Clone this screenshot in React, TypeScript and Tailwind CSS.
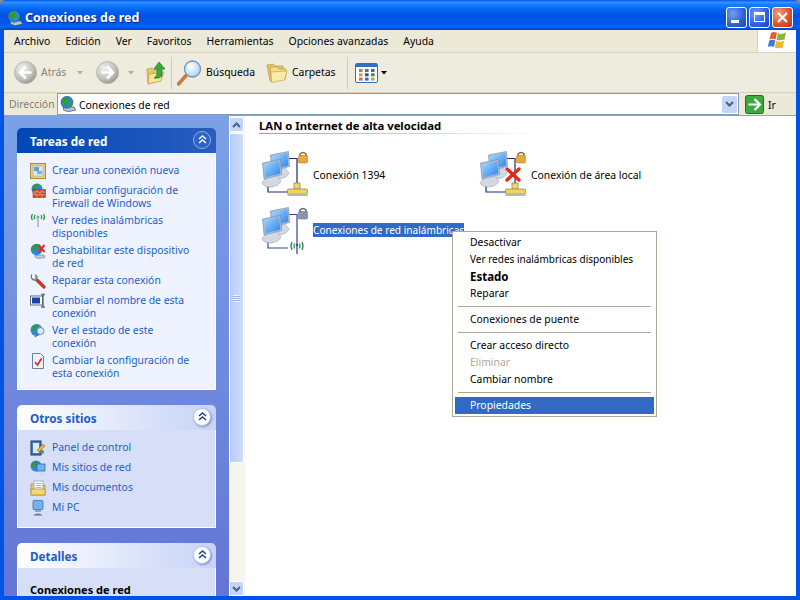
import type { ReactNode } from 'react';

const font = "font-['Noto_Sans','Liberation_Sans',sans-serif]";

function GlobeIcon({ size = 16 }: { size?: number }) {
  return (
    <svg width={size} height={size} viewBox="0 0 16 16" className="shrink-0">
      <path d="M3 10.5 L14 11 L15.8 14 L8 15.8 L3.5 14 Z" fill="#b9c4d2" stroke="#3f4f6b" strokeWidth="0.7" />
      <circle cx="7" cy="6.3" r="6" fill="#2f86e0" stroke="#174a94" strokeWidth="0.6" />
      <path d="M2.4 3.2 Q6 0 9.5 1 L8 4 L9.5 6 L7 8 L5.5 11.5 L3.6 8 L1.4 6 Z" fill="#2f9c3a" />
      <path d="M10 7 L12.8 5.8 L12.2 9.5 L10 10.8 Z" fill="#2f9c3a" />
    </svg>
  );
}

function XpFlag() {
  return (
    <svg width="24" height="22" viewBox="0 0 24 22">
      <path d="M6 3 Q9 1 12 3 L10.5 9.5 Q8 8 4.5 9.5 Z" fill="#ea5a2c" />
      <path d="M13 3 Q16 5 21 2.5 L19.5 9.5 Q15 11 11.6 9.8 Z" fill="#86b83a" />
      <path d="M4.2 10.5 Q8 9 10.3 10.5 L9 17 Q6 15.5 2.8 17 Z" fill="#3d7ed8" />
      <path d="M11.3 11 Q15 12.5 19.2 10.7 L17.8 17.6 Q13 19 9.9 17.6 Z" fill="#f3b82a" />
    </svg>
  );
}

function CaptionButton({ red, children }: { red?: boolean; children: ReactNode }) {
  return (
    <div
      className={`w-[21px] h-[21px] rounded-[3px] border border-white flex items-center justify-center ${
        red
          ? 'bg-[radial-gradient(circle_at_30%_30%,#f0a083,#d9502a_60%,#b8341a)]'
          : 'bg-[radial-gradient(circle_at_30%_30%,#6f9cf5,#2c5fe0_60%,#1a44c0)]'
      }`}
    >
      {children}
    </div>
  );
}

function NavCircle({ dir }: { dir: 'left' | 'right' }) {
  return (
    <svg width="23" height="23" viewBox="0 0 23 23" className="shrink-0">
      <defs>
        <radialGradient id="navGray" cx="35%" cy="30%" r="75%">
          <stop offset="0%" stopColor="#f0f0ee" />
          <stop offset="70%" stopColor="#bdbdb8" />
          <stop offset="100%" stopColor="#97978f" />
        </radialGradient>
      </defs>
      <circle cx="11.5" cy="11.5" r="11" fill="url(#navGray)" stroke="#a4a49d" strokeWidth="0.6" />
      <path
        d={dir === 'left' ? 'M12 5.5 L6 11.5 L12 17.5 M6.5 11.5 H17.5' : 'M11 5.5 L17 11.5 L11 17.5 M16.5 11.5 H5.5'}
        fill="none"
        stroke="#fff"
        strokeWidth="2.6"
      />
    </svg>
  );
}

function SmallArrow({ color = '#b0aea2' }: { color?: string }) {
  return (
    <svg width="6" height="4" viewBox="0 0 6 4" className="shrink-0">
      <path d="M0 0 H6 L3 3.5 Z" fill={color} />
    </svg>
  );
}

function FolderIcon({ w = 22, h = 22 }: { w?: number; h?: number }) {
  return (
    <svg width={w} height={h} viewBox="0 0 22 22" className="shrink-0">
      <path d="M1 3 L7 2 L9 4 L17 4 L18 16 L4 19 Z" fill="#e8c566" stroke="#b89a3e" strokeWidth="0.7" />
      <path d="M4 5 L11 5 L13 7 L20 7 L19.5 17 L5.5 20 Z" fill="#f3dc8c" stroke="#b89a3e" strokeWidth="0.7" />
      <path d="M5 10 L21 9 L18.5 18 L5.5 20.5 Z" fill="#fbeaa8" stroke="#c4a74a" strokeWidth="0.7" />
    </svg>
  );
}

function UpIcon() {
  return (
    <svg width="20" height="24" viewBox="0 0 20 24" className="shrink-0">
      <path d="M1 8 L6 7 L8 9 L15 9 L15 19 L2 23 Z" fill="#e8c566" stroke="#b89a3e" strokeWidth="0.7" />
      <path d="M3 13 L18 11 L15 20 L2 23 Z" fill="#fbe592" stroke="#b89a3e" strokeWidth="0.7" />
      <path d="M13 1 L19 8 L16 8 L16 15 Q13 18 8 17 Q12 15 11 8 L8 8 Z" fill="#3da83d" stroke="#1d7a2a" strokeWidth="0.7" />
    </svg>
  );
}

function SearchIcon() {
  return (
    <svg width="26" height="26" viewBox="0 0 26 26" className="shrink-0">
      <defs>
        <radialGradient id="lens" cx="40%" cy="35%" r="70%">
          <stop offset="0%" stopColor="#ffffff" />
          <stop offset="100%" stopColor="#a9d0ee" />
        </radialGradient>
      </defs>
      <path d="M1.5 24 L10 14.5" stroke="#c97a3a" strokeWidth="3.4" strokeLinecap="round" />
      <circle cx="15.5" cy="9" r="8" fill="url(#lens)" stroke="#6f93b5" strokeWidth="1.3" />
    </svg>
  );
}

function ViewsIcon() {
  const colors = ['#d9703a', '#4a8a3f', '#2f6fc4', '#c9a23a', '#2c4f9e', '#4a8a3f', '#d9703a', '#2f6fc4', '#c9a23a'];
  return (
    <svg width="23" height="20" viewBox="0 0 23 20" className="shrink-0">
      <rect x="0.5" y="0.5" width="22" height="19" rx="1.5" fill="#fff" stroke="#2f6fc4" />
      <rect x="1" y="1" width="21" height="3" fill="#2f6fc4" />
      {colors.map((c, i) => (
        <rect key={i} x={4 + (i % 3) * 6} y={6 + Math.floor(i / 3) * 4.3} width="3.6" height="3" fill={c} />
      ))}
    </svg>
  );
}

function GoIcon() {
  return (
    <svg width="19" height="19" viewBox="0 0 19 19" className="shrink-0">
      <rect x="0.5" y="0.5" width="18" height="18" rx="2" fill="#3da83d" stroke="#1d6d2a" />
      <path d="M9.5 4 L15 9.5 L9.5 15 M14 9.5 H3.5" fill="none" stroke="#fff" strokeWidth="2.2" />
    </svg>
  );
}

function ChevronPair({ dark }: { dark?: boolean }) {
  const stroke = dark ? '#fff' : '#1c3f94';
  return (
    <div
      className={`w-[18px] h-[18px] -mt-[2px] rounded-full flex items-center justify-center ${
        dark ? 'bg-[#2f63c4] border border-[#8fb0e8]' : 'bg-white border border-[#b6c4ea] shadow-[1px_1px_2px_#7f90c8]'
      }`}
    >
      <svg width="9" height="9" viewBox="0 0 9 9">
        <path d="M1 4 L4.5 1 L8 4 M1 8 L4.5 5 L8 8" fill="none" stroke={stroke} strokeWidth="1.5" />
      </svg>
    </div>
  );
}

function TaskIcon({ name }: { name: string }) {
  switch (name) {
    case 'new':
      return (
        <svg width="16" height="16" viewBox="0 0 16 16">
          <rect x="0.5" y="0.5" width="15" height="15" fill="#e5cc8a" stroke="#a98a42" />
          <rect x="3" y="3" width="10" height="10" fill="#dfe6ee" stroke="#8ca0b5" strokeWidth="0.5" />
          <rect x="4" y="4" width="5" height="4" fill="#5ea0e0" />
          <rect x="7" y="8" width="5" height="3" fill="#7fb0d8" />
        </svg>
      );
    case 'firewall':
      return (
        <svg width="16" height="16" viewBox="0 0 16 16">
          <circle cx="7" cy="6" r="5.5" fill="#2f86e0" />
          <path d="M3 2.5 Q6 0 9 1 L8 4 L4 7 L2 5 Z" fill="#2f9c3a" />
          <rect x="3" y="6.5" width="12.5" height="8" fill="#c9472b" stroke="#7f2a14" strokeWidth="0.5" />
          <path d="M3 9 H15.5 M3 11.8 H15.5 M7 6.5 V9 M12 6.5 V9 M5 9 V11.8 M10 9 V11.8 M7 11.8 V14.5 M12 11.8 V14.5" stroke="#f0c090" strokeWidth="0.6" />
        </svg>
      );
    case 'wifi':
      return (
        <svg width="16" height="16" viewBox="0 0 16 16">
          <path d="M2.5 1 Q0.5 4 2.5 7 M5 2 Q3.6 4 5 6 M11 2 Q12.4 4 11 6 M13.5 1 Q15.5 4 13.5 7" fill="none" stroke="#1f9a2a" strokeWidth="1.3" />
          <circle cx="8" cy="4" r="1.4" fill="#8a9ab0" />
          <path d="M8 4 V14" stroke="#8a9ab0" strokeWidth="1.2" />
        </svg>
      );
    case 'disable':
      return (
        <svg width="16" height="16" viewBox="0 0 16 16">
          <path d="M5 12 L14 12 L15 14.5 L8 15.5 L5 14 Z" fill="#c4cdd8" stroke="#5a6b85" strokeWidth="0.5" />
          <circle cx="6.5" cy="6.5" r="5.8" fill="#2f86e0" />
          <path d="M2 4 Q5 0.5 9 1 L8 4 L5 8 L2 7 Z" fill="#2f9c3a" />
          <path d="M8.5 2 L14.5 9 M14.5 2 L8.5 9" stroke="#d9301f" strokeWidth="2" />
        </svg>
      );
    case 'wrench':
      return (
        <svg width="16" height="16" viewBox="0 0 16 16">
          <path d="M1.5 1.5 L1.5 5 L4 6.5 L6 5 L5.5 1.5 Q8 3 7 6 L9 8 L7.5 9.5 L5.5 7.5 Q2 8 1 4.5 Z" fill="#9aa2ac" stroke="#5e6670" strokeWidth="0.7" />
          <path d="M7.5 7.5 L14 14" stroke="#c93a2a" strokeWidth="3.4" strokeLinecap="round" />
        </svg>
      );
    case 'rename':
      return (
        <svg width="16" height="16" viewBox="0 0 16 16">
          <rect x="0.5" y="3" width="12" height="9" fill="#fff" stroke="#5a6b85" />
          <rect x="2" y="4.5" width="8" height="6" fill="#1a3fae" />
          <path d="M11 1.5 H15 M13 1.5 V14 M11 14 H15" stroke="#5a6b85" strokeWidth="1.4" />
        </svg>
      );
    case 'status':
      return (
        <svg width="16" height="16" viewBox="0 0 16 16">
          <circle cx="6.5" cy="7" r="6" fill="#2f86e0" />
          <path d="M1.5 5 Q4 1 9 1.5 L7 5 L3 9 Z" fill="#2f9c3a" />
          <circle cx="10.5" cy="8" r="3.5" fill="#d8ecf8" stroke="#6f93b5" />
          <path d="M5 14 L8 11" stroke="#6b6f7a" strokeWidth="1.6" />
        </svg>
      );
    case 'config':
      return (
        <svg width="16" height="16" viewBox="0 0 16 16">
          <path d="M2.5 0.5 H10.5 L13.5 3.5 V15.5 H2.5 Z" fill="#eef2fa" stroke="#6d7fa5" />
          <path d="M5 9 L7.5 12 L11.5 5.5" fill="none" stroke="#d9301f" strokeWidth="1.7" />
        </svg>
      );
    case 'panel':
      return (
        <svg width="16" height="16" viewBox="0 0 16 16">
          <rect x="1" y="1" width="10" height="14" fill="#4d74c4" stroke="#20356f" />
          <rect x="3" y="3" width="6" height="10" fill="#dfe8f6" />
          <path d="M7 10 L13 4 L15 6 L9 12 Z" fill="#e5b23a" stroke="#7a6220" strokeWidth="0.5" />
          <circle cx="12" cy="12" r="2" fill="#4aa04a" />
        </svg>
      );
    case 'places':
      return (
        <svg width="16" height="16" viewBox="0 0 16 16">
          <circle cx="6" cy="6" r="5.5" fill="#2f86e0" />
          <path d="M1.5 4 Q4 0.5 8 1 L6.5 5 L2 8 Z" fill="#2f9c3a" />
          <rect x="7" y="4" width="8" height="7" fill="#6fb4ee" stroke="#2b5a9a" strokeWidth="0.7" />
          <path d="M8 14.5 Q11 11.5 14.5 14.5 Z" fill="#c9d2dc" />
        </svg>
      );
    case 'docs':
      return (
        <svg width="16" height="16" viewBox="0 0 16 16">
          <path d="M1 4 H5 L6 5 H15 V15 H1 Z" fill="#f0c95c" stroke="#a98a30" strokeWidth="0.7" />
          <rect x="4" y="1" width="9" height="9" fill="#fff" stroke="#8a94a8" strokeWidth="0.7" />
          <path d="M5.5 3.5 H11.5 M5.5 5.5 H11.5 M5.5 7.5 H11.5" stroke="#8aa0c0" strokeWidth="0.7" />
          <rect x="1" y="9" width="14" height="6" fill="#f6d874" stroke="#a98a30" strokeWidth="0.7" />
        </svg>
      );
    default:
      return (
        <svg width="16" height="16" viewBox="0 0 16 16">
          <rect x="3" y="0.5" width="10" height="9" rx="1" fill="#6fb4ee" stroke="#3f5f90" strokeWidth="0.7" />
          <path d="M5 10 H11 L11 12 H5 Z" fill="#9aa4b5" />
          <path d="M3 15.5 Q8 11.5 13 15.5 Z" fill="#6a7487" />
        </svg>
      );
  }
}

function Computer({ x, y }: { x: number; y: number }) {
  return (
    <g transform={`translate(${x} ${y})`}>
      <path d="M5 17 L14 16 L19 22 Q17 27 9 28 Q2 28 0 24 Z" fill="#d3d9e2" stroke="#8a95a8" strokeWidth="0.5" />
      <path d="M0.5 4 L18.5 0.5 L19.5 15.5 L2 20 Z" fill="#a9c0e0" stroke="#6f86aa" strokeWidth="0.6" />
      <path d="M2 5.2 L17.4 2 L18.2 14.4 L3.2 18.4 Z" fill="url(#screen)" />
    </g>
  );
}

function NetworkIcon({ kind }: { kind: 'wired' | 'broken' | 'wifi' }) {
  const wire = kind === 'wifi' ? '#33479e' : '#1b2a70';
  return (
    <svg width="48" height="48" viewBox="0 0 48 48" className="shrink-0">
      <defs>
        <linearGradient id="screen" x1="0" y1="0" x2="1" y2="1">
          <stop offset="0%" stopColor="#a8dcfb" />
          <stop offset="100%" stopColor="#2a80ea" />
        </linearGradient>
      </defs>
      <path d="M8 34 V42 H28" fill="none" stroke={wire} strokeWidth="1.2" />
      <path d="M28 8.5 H37 V38" fill="none" stroke={wire} strokeWidth="1.2" />
      <Computer x={10} y={1} />
      <Computer x={2} y={9} />
      {/* candado */}
      <path d="M40 6 V4 Q43 1 46 4 V6" fill="none" stroke={kind === 'wifi' ? '#5b6577' : '#8b6a26'} strokeWidth="1.5" />
      <rect x="38.5" y="5.5" width="9" height="7.5" rx="1" fill={kind === 'wifi' ? '#8c96a6' : '#eaa73a'} stroke={kind === 'wifi' ? '#5b6577' : '#a8741e'} strokeWidth="0.5" />
      {kind === 'wifi' ? (
        <g fill="none" strokeWidth="1.3">
          <path d="M32 36 Q30 40 32 44 M34.5 37.5 Q33.5 40 34.5 42.5" stroke="#2e8a5e" />
          <path d="M42 36 Q44 40 42 44 M39.5 37.5 Q40.5 40 39.5 42.5" stroke="#2e8a5e" />
          <circle cx="37" cy="39" r="1.2" fill="#33479e" stroke="none" />
          <path d="M37 39 V48" stroke="#33479e" />
        </g>
      ) : (
        <g>
          <rect x="34" y="33" width="6" height="6" fill="#f4d568" stroke="#7f7a55" strokeWidth="0.7" />
          <rect x="27.5" y="39" width="20" height="5" rx="1" fill="#f2d35e" stroke="#8a8560" strokeWidth="0.7" />
          <rect x="27.5" y="43" width="20" height="3" fill="#b9b9a8" />
        </g>
      )}
      {kind === 'broken' && (
        <path d="M29 19 L41 30 M41 19 L29 30" stroke="#e02a1a" strokeWidth="3.4" strokeLinecap="round" />
      )}
    </svg>
  );
}

function TaskLink({ icon, children }: { icon: string; children: ReactNode }) {
  return (
    <div className="flex items-start gap-[6px] min-h-[16px] mb-[4px] text-[#215dc6] text-[10.4px] leading-[13px]">
      <div className="w-4 h-[13px] -mt-[1px] shrink-0">
        <TaskIcon name={icon} />
      </div>
      <span className="w-[140px]">{children}</span>
    </div>
  );
}

function Panel({ title, special, bodyClass, children }: { title: string; special?: boolean; bodyClass: string; children: ReactNode }) {
  return (
    <div className="w-[199px] mb-[15px] shrink-0">
      <div
        className={`h-[25px] rounded-t-[5px] flex items-center justify-between pl-[13px] pr-[5px] text-[11.7px] font-bold ${
          special
            ? 'bg-[linear-gradient(90deg,#0049b4,#2a5cc0)] text-white'
            : 'bg-[linear-gradient(90deg,#ffffff,#c6d3f7)] text-[#215dc6]'
        }`}
      >
        <span className="pt-[2px]">{title}</span>
        <ChevronPair dark={special} />
      </div>
      <div className={`border border-t-0 border-white pl-[12px] pr-2 ${special ? 'bg-[#eff3ff]' : 'bg-[#d6dff7]'} ${bodyClass}`}>
        {children}
      </div>
    </div>
  );
}

function MenuSeparator() {
  return <div className="h-px bg-[#aca899] mx-[3px] my-[4px]" />;
}

function MenuRow({ children, className = '' }: { children: ReactNode; className?: string }) {
  return <div className={`h-[17px] leading-[17px] pl-[15px] ${className}`}>{children}</div>;
}

function ScrollArrow({ up }: { up?: boolean }) {
  return (
    <div className="w-[15px] h-[15px] rounded-[2px] border border-white bg-[#c4d5f7] flex items-center justify-center">
      <svg width="9" height="6" viewBox="0 0 9 6">
        <path d={up ? 'M1 5 L4.5 1.5 L8 5' : 'M1 1 L4.5 4.5 L8 1'} fill="none" stroke="#4d6185" strokeWidth="2" />
      </svg>
    </div>
  );
}

export default function App() {
  return (
    <div className={`w-[800px] h-[600px] relative overflow-hidden bg-[#8a8a8a] ${font}`}>
      <div className="h-full flex flex-col rounded-t-[7px] overflow-hidden bg-[#0054e3]">
        {/* Barra de titulo */}
        <div className="h-[30px] shrink-0 flex items-center pl-[7px] pr-[7px] pt-[5px] bg-[linear-gradient(180deg,#0058ee_0%,#3593ff_8%,#1a7fff_14%,#0468f4_30%,#0054e3_50%,#0055eb_75%,#0062f8_88%,#0050d0_97%,#003dac_100%)]">
          <GlobeIcon />
          <span className="ml-[2px] pt-px text-white text-[12.5px] font-bold [text-shadow:1px_1px_#0f2a89]">Conexiones de red</span>
          <div className="ml-auto flex gap-[2px] -mt-[1px]">
            <CaptionButton>
              <div className="w-[8px] h-[3px] bg-white mt-[9px] mr-[4px]" />
            </CaptionButton>
            <CaptionButton>
              <div className="w-[11px] h-[10px] border border-white border-t-[3px]" />
            </CaptionButton>
            <CaptionButton red>
              <svg width="11" height="11" viewBox="0 0 11 11">
                <path d="M1 1 L10 10 M10 1 L1 10" stroke="#fff" strokeWidth="2" />
              </svg>
            </CaptionButton>
          </div>
        </div>

        <div className="flex-1 min-h-0 flex flex-col mx-[4px] mb-[4px] bg-[#ece9d8] text-black text-[10.4px]">
          {/* Menu */}
          <div className="h-[23px] shrink-0 flex items-center pl-[10px] pt-[2px] gap-[15px] border-b border-[#d8d2bd] relative">
            <span>Archivo</span>
            <span>Edición</span>
            <span>Ver</span>
            <span>Favoritos</span>
            <span>Herramientas</span>
            <span>Opciones avanzadas</span>
            <span>Ayuda</span>
            <div className="absolute right-0 top-0 h-[22px] w-[39px] bg-white border-l border-[#d8d2bd] flex items-center justify-center">
              <XpFlag />
            </div>
          </div>

          {/* Botones */}
          <div className="h-[40px] shrink-0 flex items-center pl-[10px] border-b border-[#d8d2bd] bg-[#eeebdf]">
            <NavCircle dir="left" />
            <span className="ml-[4px] w-[26px] text-[#85847c]">Atrás</span>
            <div className="ml-[10px]"><SmallArrow /></div>
            <div className="ml-[13px]"><NavCircle dir="right" /></div>
            <div className="ml-[9px]"><SmallArrow /></div>
            <div className="ml-[12px]"><UpIcon /></div>
            <div className="ml-[5px] w-px h-[32px] bg-[#d0cdbc]" />
            <div className="ml-[5px]"><SearchIcon /></div>
            <span className="ml-[3px] w-[49px]">Búsqueda</span>
            <div className="ml-[11px]"><FolderIcon /></div>
            <span className="ml-[4px] w-[46px]">Carpetas</span>
            <div className="ml-[9px] w-px h-[32px] bg-[#d0cdbc]" />
            <div className="ml-[7px]"><ViewsIcon /></div>
            <div className="ml-[3px]"><SmallArrow color="#000" /></div>
          </div>

          {/* Direccion */}
          <div className="h-[23px] shrink-0 flex items-center pl-[5px] border-b border-[#a0a0a0]">
            <span className="w-[48px] pt-[2px] text-[#7f7c73]">Dirección</span>
            <div className="w-[682px] h-[22px] bg-white border border-[#7f9db9] flex items-center pl-[2px] pr-[1px]">
              <GlobeIcon />
              <span className="ml-[3px] pt-[3px]">Conexiones de red</span>
              <div className="ml-auto w-[15px] h-[17px] rounded-[2px] bg-[#c4d5f7] flex items-center justify-center">
                <svg width="9" height="6" viewBox="0 0 9 6">
                  <path d="M1 1 L4.5 4.5 L8 1" fill="none" stroke="#4d6185" strokeWidth="2" />
                </svg>
              </div>
            </div>
            <div className="ml-[6px]"><GoIcon /></div>
            <span className="ml-[4px] pt-[3px]">Ir</span>
          </div>

          <div className="flex-1 min-h-0 flex bg-white">
            {/* Panel de tareas */}
            <div className="w-[225px] shrink-0 overflow-hidden pt-[12px] pl-[13px] flex flex-col bg-[linear-gradient(180deg,#7ba2e7,#6375d6)]">
              <Panel title="Tareas de red" special bodyClass="pt-[11px] pb-[5px]">
                <TaskLink icon="new">Crear una conexión nueva</TaskLink>
                <TaskLink icon="firewall">Cambiar configuración de Firewall de Windows</TaskLink>
                <TaskLink icon="wifi">Ver redes inalámbricas disponibles</TaskLink>
                <TaskLink icon="disable">Deshabilitar este dispositivo de red</TaskLink>
                <TaskLink icon="wrench">Reparar esta conexión</TaskLink>
                <TaskLink icon="rename">Cambiar el nombre de esta conexión</TaskLink>
                <TaskLink icon="status">Ver el estado de este conexión</TaskLink>
                <TaskLink icon="config">Cambiar la configuración de esta conexión</TaskLink>
              </Panel>
              <Panel title="Otros sitios" bodyClass="pt-[11px] pb-[6px]">
                <TaskLink icon="panel">Panel de control</TaskLink>
                <TaskLink icon="places">Mis sitios de red</TaskLink>
                <TaskLink icon="docs">Mis documentos</TaskLink>
                <TaskLink icon="pc">Mi PC</TaskLink>
              </Panel>
              <Panel title="Detalles" bodyClass="pt-[15px] pb-[10px]">
                <div className="font-bold text-[11px] leading-[13px]">Conexiones de red</div>
              </Panel>
            </div>

            {/* Barra de desplazamiento */}
            <div className="w-[16px] shrink-0 flex flex-col pt-px bg-[#f6f4ee]">
              <ScrollArrow up />
              <div className="h-[330px] mt-px w-[15px] rounded-[2px] border border-white bg-[linear-gradient(90deg,#b6cbf5,#cddcfb)] flex items-center justify-center">
                <div className="w-[7px] h-[7px] bg-[repeating-linear-gradient(180deg,#eef3ff_0,#eef3ff_1px,#a0b4e0_1px,#a0b4e0_2px)]" />
              </div>
              <div className="mt-auto"><ScrollArrow /></div>
            </div>

            {/* Contenido */}
            <div className="flex-1 min-w-0 pl-[14px] pt-[3px]">
              <div className="font-bold text-[11.3px] leading-[14px] h-[15px] w-[280px] bg-[linear-gradient(90deg,#7ba2e7,#ffffff)] bg-no-repeat bg-[length:100%_1px] bg-bottom">
                LAN o Internet de alta velocidad
              </div>
              <div className="grid grid-cols-[218px_218px] auto-rows-[56px] mt-[16px] ml-px">
                <div className="flex items-center gap-[5px] self-start">
                  <NetworkIcon kind="wired" />
                  <span className="pt-[3px]">Conexión 1394</span>
                </div>
                <div className="flex items-center gap-[5px] self-start">
                  <NetworkIcon kind="broken" />
                  <span className="pt-[3px]">Conexión de área local</span>
                </div>
                <div className="flex items-center gap-[5px] self-start">
                  <NetworkIcon kind="wifi" />
                  <span className="bg-[#316ac5] text-white text-[10.1px] whitespace-nowrap leading-[14px]">Conexiones de red inalámbricas</span>
                </div>
              </div>
            </div>
          </div>
        </div>
      </div>

      {/* Menu contextual */}
      <div className="absolute left-[452px] top-[231px] w-[205px] h-[186px] bg-white border border-[#aca899] p-[2px] text-[10.4px] text-black">
        <MenuRow>Desactivar</MenuRow>
        <MenuRow className="text-[10px]">Ver redes inalámbricas disponibles</MenuRow>
        <MenuRow className="font-bold text-[11.5px]">Estado</MenuRow>
        <MenuRow>Reparar</MenuRow>
        <MenuSeparator />
        <MenuRow>Conexiones de puente</MenuRow>
        <MenuSeparator />
        <MenuRow>Crear acceso directo</MenuRow>
        <MenuRow className="text-[#aca899]">Eliminar</MenuRow>
        <MenuRow>Cambiar nombre</MenuRow>
        <MenuSeparator />
        <MenuRow className="bg-[#316ac5] text-white">Propiedades</MenuRow>
      </div>
    </div>
  );
}
